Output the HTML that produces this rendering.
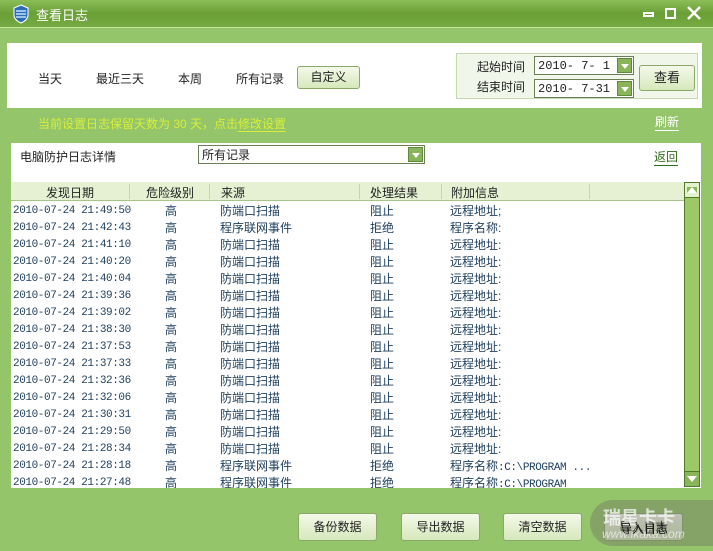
<!DOCTYPE html>
<html><head><meta charset="utf-8"><style>
*{margin:0;padding:0;box-sizing:border-box}
body{width:713px;height:551px;overflow:hidden;background:#94c56a;font-family:"Liberation Sans","Noto Sans CJK SC",sans-serif;font-size:12px;color:#222;position:relative}
.abs{position:absolute}
.title{left:0;top:0;width:713px;height:28px;background:linear-gradient(#8cbd58,#6a9f36 50%,#76aa42);border-bottom:1px solid #c8e39a}
.title span{position:absolute;left:36px;top:5px;color:#fff;font-size:13px}
.p1{left:7px;top:43px;width:695px;height:65px;background:#fff}
.tab{top:70px;font-size:12px}
.btn{border:1px solid #8aa86a;border-radius:3px;background:linear-gradient(#f4f9ea,#d6e8bb);text-align:center}
.dbox{left:456px;top:53px;width:242px;height:46px;border:1px solid #c6d8b0;background:#f1f6ea}
.sel{background:#fff;border:1px solid #6a7f55;height:19px;font-family:"Liberation Mono","Noto Sans CJK SC",monospace;font-size:12px;padding:2px 3px;line-height:14px}
.arr{position:absolute;right:1px;top:1px;width:15px;height:15px;background:#8ab45a;border:1px solid #5f8a38}
.arr:after{content:"";position:absolute;left:3px;top:5px;border-left:4px solid transparent;border-right:4px solid transparent;border-top:5px solid #fff}
.p2{left:11px;top:143px;width:690px;height:345px;background:#fff}
.hdr{left:11px;top:182px;width:673px;height:19px;background:#e6f1d4;border-bottom:1px solid #a7c48a}
.hdr div{position:absolute;top:2px;height:15px}
.sep{position:absolute;top:0;width:1px;height:19px;background:#c2d5ad}
.row{position:absolute;left:13px;height:17px;line-height:17px;font-size:12px;color:#1e3e5c;white-space:nowrap}
.row span{position:absolute;top:0;line-height:17px}
.row span span{position:static}
.d{font-family:"Liberation Mono",monospace;font-size:11px;letter-spacing:-0.4px}
.sb{left:684px;top:182px;width:16px;height:305px;background:#9dc865;border:1px solid #4f7a2a}
.bb{top:513px;width:79px;height:28px;line-height:26px;font-size:12px}
</style></head><body>
<div class="abs title"><svg class="abs" style="left:12px;top:4px" width="18" height="20"><path d="M9 1L16 4V11Q16 16 9 19Q2 16 2 11V4Z" fill="#2e6cb8" stroke="#fff" stroke-width="1"/><path d="M4 7H14M4 10H14M4 13H14" stroke="#bfe0ff" stroke-width="1.5"/></svg><span>查看日志</span>
<div class="abs" style="left:643px;top:12px;width:11px;height:5px;border:2px solid #fff"></div>
<div class="abs" style="left:665px;top:8px;width:11px;height:11px;border:2px solid #fff"></div>
<svg class="abs" style="left:687px;top:6px" width="14" height="14"><path d="M1 1L13 13M13 1L1 13" stroke="#fff" stroke-width="2.5"/></svg></div>
<div class="abs p1"></div>
<div class="abs tab" style="left:38px">当天</div>
<div class="abs tab" style="left:96px">最近三天</div>
<div class="abs tab" style="left:178px">本周</div>
<div class="abs tab" style="left:236px">所有记录</div>
<div class="abs btn" style="left:297px;top:66px;width:63px;height:23px;line-height:21px">自定义</div>
<div class="abs dbox"></div>
<div class="abs" style="left:477px;top:58px">起始时间</div>
<div class="abs" style="left:477px;top:78px">结束时间</div>
<div class="abs sel" style="left:534px;top:56px;width:100px">2010- 7- 1<div class="arr"></div></div>
<div class="abs sel" style="left:534px;top:79px;width:100px">2010- 7-31<div class="arr"></div></div>
<div class="abs btn" style="left:639px;top:65px;width:56px;height:26px;line-height:24px;font-size:13px">查看</div>
<div class="abs" style="left:38px;top:115px;color:#d8ee3a">当前设置日志保留天数为 30 天，点击<span style="border-bottom:1px solid #d8ee3a">修改设置</span></div>
<div class="abs" style="left:655px;top:113px;color:#fff;border-bottom:1px solid #fff">刷新</div>
<div class="abs p2"></div>
<div class="abs" style="left:20px;top:148px">电脑防护日志详情</div>
<div class="abs sel" style="left:198px;top:145px;width:227px;font-family:'Liberation Sans','Noto Sans CJK SC',sans-serif">所有记录<div class="arr"></div></div>
<div class="abs" style="left:654px;top:148px;color:#2f6a1a;border-bottom:1px solid #2f6a1a">返回</div>
<div class="abs hdr">
<div style="left:35px">发现日期</div><div class="sep" style="left:118px"></div>
<div style="left:135px">危险级别</div><div class="sep" style="left:198px"></div>
<div style="left:210px">来源</div><div class="sep" style="left:348px"></div>
<div style="left:359px">处理结果</div><div class="sep" style="left:430px"></div>
<div style="left:440px">附加信息</div><div class="sep" style="left:578px"></div>
</div>
<div class="abs sb"><div class="abs" style="left:0;top:0;width:14px;height:15px;background:#e4f1cf;border-bottom:1px solid #4f7a2a"><div style="margin:4px auto 0;width:0;border-left:5px solid transparent;border-right:5px solid transparent;border-bottom:6px solid #fff;background:#8ab45a"></div></div>
<div class="abs" style="left:0;bottom:0;width:14px;height:15px;background:#8ab45a;border-top:1px solid #4f7a2a"><div style="margin:4px auto 0;width:0;border-left:5px solid transparent;border-right:5px solid transparent;border-top:6px solid #fff"></div></div></div>
<div class="abs" style="left:11px;top:202px;width:673px;height:286px;overflow:hidden">
<div style="position:relative;left:-11px;top:-202px">
<div class="row" style="top:203px"><span class="d">2010-07-24 21:49:50</span><span style="left:152px">高</span><span style="left:207px">防端口扫描</span><span style="left:357px">阻止</span><span style="left:437px">远程地址;</span></div>
<div class="row" style="top:220px"><span class="d">2010-07-24 21:42:43</span><span style="left:152px">高</span><span style="left:207px">程序联网事件</span><span style="left:357px">拒绝</span><span style="left:437px">程序名称:</span></div>
<div class="row" style="top:237px"><span class="d">2010-07-24 21:41:10</span><span style="left:152px">高</span><span style="left:207px">防端口扫描</span><span style="left:357px">阻止</span><span style="left:437px">远程地址:</span></div>
<div class="row" style="top:254px"><span class="d">2010-07-24 21:40:20</span><span style="left:152px">高</span><span style="left:207px">防端口扫描</span><span style="left:357px">阻止</span><span style="left:437px">远程地址:</span></div>
<div class="row" style="top:271px"><span class="d">2010-07-24 21:40:04</span><span style="left:152px">高</span><span style="left:207px">防端口扫描</span><span style="left:357px">阻止</span><span style="left:437px">远程地址:</span></div>
<div class="row" style="top:288px"><span class="d">2010-07-24 21:39:36</span><span style="left:152px">高</span><span style="left:207px">防端口扫描</span><span style="left:357px">阻止</span><span style="left:437px">远程地址:</span></div>
<div class="row" style="top:305px"><span class="d">2010-07-24 21:39:02</span><span style="left:152px">高</span><span style="left:207px">防端口扫描</span><span style="left:357px">阻止</span><span style="left:437px">远程地址:</span></div>
<div class="row" style="top:322px"><span class="d">2010-07-24 21:38:30</span><span style="left:152px">高</span><span style="left:207px">防端口扫描</span><span style="left:357px">阻止</span><span style="left:437px">远程地址:</span></div>
<div class="row" style="top:339px"><span class="d">2010-07-24 21:37:53</span><span style="left:152px">高</span><span style="left:207px">防端口扫描</span><span style="left:357px">阻止</span><span style="left:437px">远程地址:</span></div>
<div class="row" style="top:356px"><span class="d">2010-07-24 21:37:33</span><span style="left:152px">高</span><span style="left:207px">防端口扫描</span><span style="left:357px">阻止</span><span style="left:437px">远程地址:</span></div>
<div class="row" style="top:373px"><span class="d">2010-07-24 21:32:36</span><span style="left:152px">高</span><span style="left:207px">防端口扫描</span><span style="left:357px">阻止</span><span style="left:437px">远程地址:</span></div>
<div class="row" style="top:390px"><span class="d">2010-07-24 21:32:06</span><span style="left:152px">高</span><span style="left:207px">防端口扫描</span><span style="left:357px">阻止</span><span style="left:437px">远程地址:</span></div>
<div class="row" style="top:407px"><span class="d">2010-07-24 21:30:31</span><span style="left:152px">高</span><span style="left:207px">防端口扫描</span><span style="left:357px">阻止</span><span style="left:437px">远程地址:</span></div>
<div class="row" style="top:424px"><span class="d">2010-07-24 21:29:50</span><span style="left:152px">高</span><span style="left:207px">防端口扫描</span><span style="left:357px">阻止</span><span style="left:437px">远程地址:</span></div>
<div class="row" style="top:441px"><span class="d">2010-07-24 21:28:34</span><span style="left:152px">高</span><span style="left:207px">防端口扫描</span><span style="left:357px">阻止</span><span style="left:437px">远程地址:</span></div>
<div class="row" style="top:458px"><span class="d">2010-07-24 21:28:18</span><span style="left:152px">高</span><span style="left:207px">程序联网事件</span><span style="left:357px">拒绝</span><span style="left:437px">程序名称<span class="d">:C:\PROGRAM ...</span></span></div>
<div class="row" style="top:475px"><span class="d">2010-07-24 21:27:48</span><span style="left:152px">高</span><span style="left:207px">程序联网事件</span><span style="left:357px">拒绝</span><span style="left:437px">程序名称<span class="d">:C:\PROGRAM</span></span></div>
</div></div>
<div class="abs btn bb" style="left:298px">备份数据</div>
<div class="abs btn bb" style="left:401px">导出数据</div>
<div class="abs btn bb" style="left:503px">清空数据</div>
<div class="abs btn bb" style="left:604px">导入日志</div>
<div class="abs" style="left:590px;top:500px;width:123px;height:46px;border-radius:23px 0 0 23px;background:rgba(110,110,100,0.4)"></div>
<div class="abs" style="left:603px;top:504px;color:#fff;font-size:18px;font-weight:bold;opacity:.7">瑞星卡卡</div>
<div class="abs" style="left:602px;top:527px;color:#eee;font-size:12px;font-style:italic;opacity:.8">www.ikaka.com</div>
<div class="abs" style="left:620px;top:520px;color:#111">导入日志</div>
</body></html>
